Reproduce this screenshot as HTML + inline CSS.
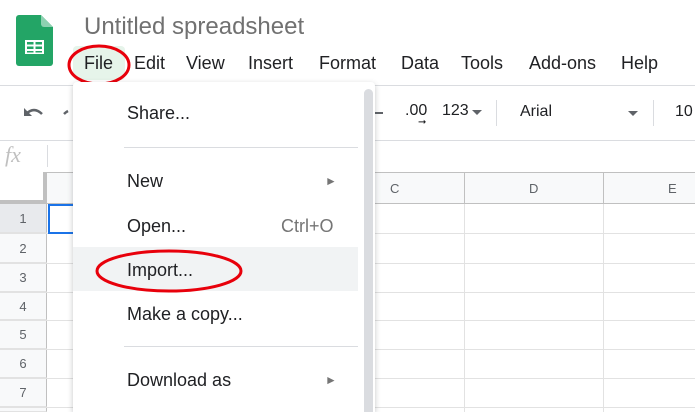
<!DOCTYPE html>
<html style="width:695px;height:412px;overflow:hidden"><head><meta charset="utf-8"><style>
*{margin:0;padding:0;box-sizing:border-box}
body{width:695px;height:412px;overflow:hidden;background:#fff;font-family:"Liberation Sans",Arial,sans-serif;position:relative;color:#202124}
.a{position:absolute}
.t{position:absolute;white-space:nowrap}
.menu span{position:absolute;font-size:18px;white-space:nowrap;color:#202124}
.rh{position:absolute;left:0;width:47px;background:#f8f9fa;border-right:1px solid #c0c0c0;border-bottom:1px solid #e2e2e2;color:#5f6368;font-size:13px;text-align:center}
</style></head><body>
<svg class="a" style="left:16px;top:15px" width="37" height="51" viewBox="0 0 37 51">
<path d="M3 0H25L37 12V48a3 3 0 0 1-3 3H3a3 3 0 0 1-3-3V3a3 3 0 0 1 3-3z" fill="#23a566"/>
<path d="M25 0L37 12H28a3 3 0 0 1-3-3z" fill="#8ed1b1"/>
<rect x="9" y="25" width="19" height="14" fill="#fff"/>
<rect x="11" y="27" width="6.5" height="2.5" fill="#23a566"/><rect x="19.5" y="27" width="6.5" height="2.5" fill="#23a566"/>
<rect x="11" y="31.5" width="6.5" height="2.5" fill="#23a566"/><rect x="19.5" y="31.5" width="6.5" height="2.5" fill="#23a566"/>
<rect x="11" y="36" width="6.5" height="1.5" fill="#23a566"/><rect x="19.5" y="36" width="6.5" height="1.5" fill="#23a566"/>
</svg>
<div class="t" style="left:84px;top:13px;font-size:24px;color:#717171">Untitled spreadsheet</div>
<div class="a" style="left:73px;top:46px;width:52px;height:34px;background:#e6f4ea;border-radius:4px"></div>
<div class="t" style="left:84px;top:53px;font-size:18px">File</div>
<div class="t" style="left:134px;top:53px;font-size:18px">Edit</div>
<div class="t" style="left:186px;top:53px;font-size:18px">View</div>
<div class="t" style="left:248px;top:53px;font-size:18px">Insert</div>
<div class="t" style="left:319px;top:53px;font-size:18px">Format</div>
<div class="t" style="left:401px;top:53px;font-size:18px">Data</div>
<div class="t" style="left:461px;top:53px;font-size:18px">Tools</div>
<div class="t" style="left:529px;top:53px;font-size:18px">Add-ons</div>
<div class="t" style="left:621px;top:53px;font-size:18px">Help</div>
<svg class="a" style="left:66px;top:43px" width="66" height="44"><ellipse cx="33" cy="22" rx="30" ry="19" fill="none" stroke="#e8000b" stroke-width="3"/></svg>
<div class="a" style="left:0;top:85px;width:695px;height:1px;background:#dadce0"></div>
<svg class="a" style="left:22px;top:104px" width="48" height="16"><path d="M4 10 Q12 2 20 10" fill="none" stroke="#5f6368" stroke-width="2.5"/><path d="M2 4V12H10z" fill="#5f6368"/><path d="M42 10 Q44 8 46 7" fill="none" stroke="#5f6368" stroke-width="2.5"/></svg>
<div class="a" style="left:375px;top:112px;width:8px;height:2px;background:#5f6368"></div>
<div class="t" style="left:405px;top:102px;font-size:16px;color:#202124">.00</div>
<div class="t" style="left:418px;top:117px;font-size:10px;color:#202124">➞</div>
<div class="t" style="left:442px;top:102px;font-size:16px">123</div>
<svg class="a" style="left:472px;top:110px" width="10" height="6"><path d="M0 0H10L5 5z" fill="#5f6368"/></svg>
<div class="a" style="left:496px;top:100px;width:1px;height:26px;background:#dadce0"></div>
<div class="t" style="left:520px;top:103px;font-size:16px">Arial</div>
<svg class="a" style="left:628px;top:111px" width="10" height="6"><path d="M0 0H10L5 5z" fill="#5f6368"/></svg>
<div class="a" style="left:653px;top:100px;width:1px;height:26px;background:#dadce0"></div>
<div class="t" style="left:675px;top:103px;font-size:16px">10</div>
<div class="a" style="left:0;top:140px;width:695px;height:1px;background:#dadce0"></div>
<div class="t" style="left:5px;top:142px;font-size:22px;font-style:italic;color:#c0c0c0;font-family:'Liberation Serif',serif">fx</div>
<div class="a" style="left:47px;top:145px;width:1px;height:22px;background:#dadce0"></div>
<div class="a" style="left:0;top:172px;width:695px;height:32px;background:#f8f9fa;border-top:1px solid #c0c0c0;border-bottom:1px solid #c0c0c0"></div>
<div class="a" style="left:0;top:172px;width:47px;height:32px;background:#fff;border-right:4px solid #c0c0c0;border-bottom:4px solid #c0c0c0"></div>
<div class="a" style="left:464px;top:173px;width:1px;height:239px;background:#e2e2e2"></div>
<div class="a" style="left:603px;top:173px;width:1px;height:239px;background:#e2e2e2"></div>
<div class="a" style="left:464px;top:173px;width:1px;height:31px;background:#c0c0c0"></div>
<div class="a" style="left:603px;top:173px;width:1px;height:31px;background:#c0c0c0"></div>
<div class="t" style="left:390px;top:181px;font-size:13px;color:#5f6368">C</div>
<div class="t" style="left:529px;top:181px;font-size:13px;color:#5f6368">D</div>
<div class="t" style="left:668px;top:181px;font-size:13px;color:#5f6368">E</div>
<div class="a" style="left:0;top:233px;width:695px;height:1px;background:#e2e2e2"></div>
<div class="a" style="left:0;top:263px;width:695px;height:1px;background:#e2e2e2"></div>
<div class="a" style="left:0;top:292px;width:695px;height:1px;background:#e2e2e2"></div>
<div class="a" style="left:0;top:320px;width:695px;height:1px;background:#e2e2e2"></div>
<div class="a" style="left:0;top:349px;width:695px;height:1px;background:#e2e2e2"></div>
<div class="a" style="left:0;top:378px;width:695px;height:1px;background:#e2e2e2"></div>
<div class="a" style="left:0;top:407px;width:695px;height:1px;background:#e2e2e2"></div>
<div class="rh" style="top:204px;height:29px;line-height:29px;background:#e8eaed">1</div>
<div class="rh" style="top:234px;height:29px;line-height:29px">2</div>
<div class="rh" style="top:264px;height:28px;line-height:28px">3</div>
<div class="rh" style="top:293px;height:27px;line-height:27px">4</div>
<div class="rh" style="top:321px;height:28px;line-height:28px">5</div>
<div class="rh" style="top:350px;height:28px;line-height:28px">6</div>
<div class="rh" style="top:379px;height:28px;line-height:28px">7</div>
<div class="rh" style="top:408px;height:4px"></div>
<div class="a" style="left:48px;top:204px;width:30px;height:30px;border:2px solid #1a73e8"></div>
<div class="a menu" style="left:73px;top:82px;width:302px;height:330px;background:#fff;border-radius:4px 4px 0 0;box-shadow:0 2px 6px rgba(60,64,67,.3)">
<div class="a" style="left:0;top:165px;width:285px;height:44px;background:#f1f3f4"></div>
<span style="left:54px;top:21px">Share...</span>
<div class="a" style="left:51px;top:65px;width:234px;height:1px;background:#dadce0"></div>
<span style="left:54px;top:89px">New</span>
<span style="left:252px;top:92px;font-size:12px;color:#757575">►</span>
<span style="left:54px;top:134px">Open...</span>
<span style="left:208px;top:134px;color:#757575">Ctrl+O</span>
<span style="left:54px;top:178px">Import...</span>
<span style="left:54px;top:222px">Make a copy...</span>
<div class="a" style="left:51px;top:264px;width:234px;height:1px;background:#dadce0"></div>
<span style="left:54px;top:288px">Download as</span>
<span style="left:252px;top:291px;font-size:12px;color:#757575">►</span>
<div class="a" style="left:291px;top:7px;width:9px;height:330px;background:#dadce0;border-radius:5px"></div>
</div>
<svg class="a" style="left:95px;top:248px" width="150" height="46"><ellipse cx="74" cy="23" rx="72" ry="20" fill="none" stroke="#e8000b" stroke-width="3"/></svg>
</body></html>
